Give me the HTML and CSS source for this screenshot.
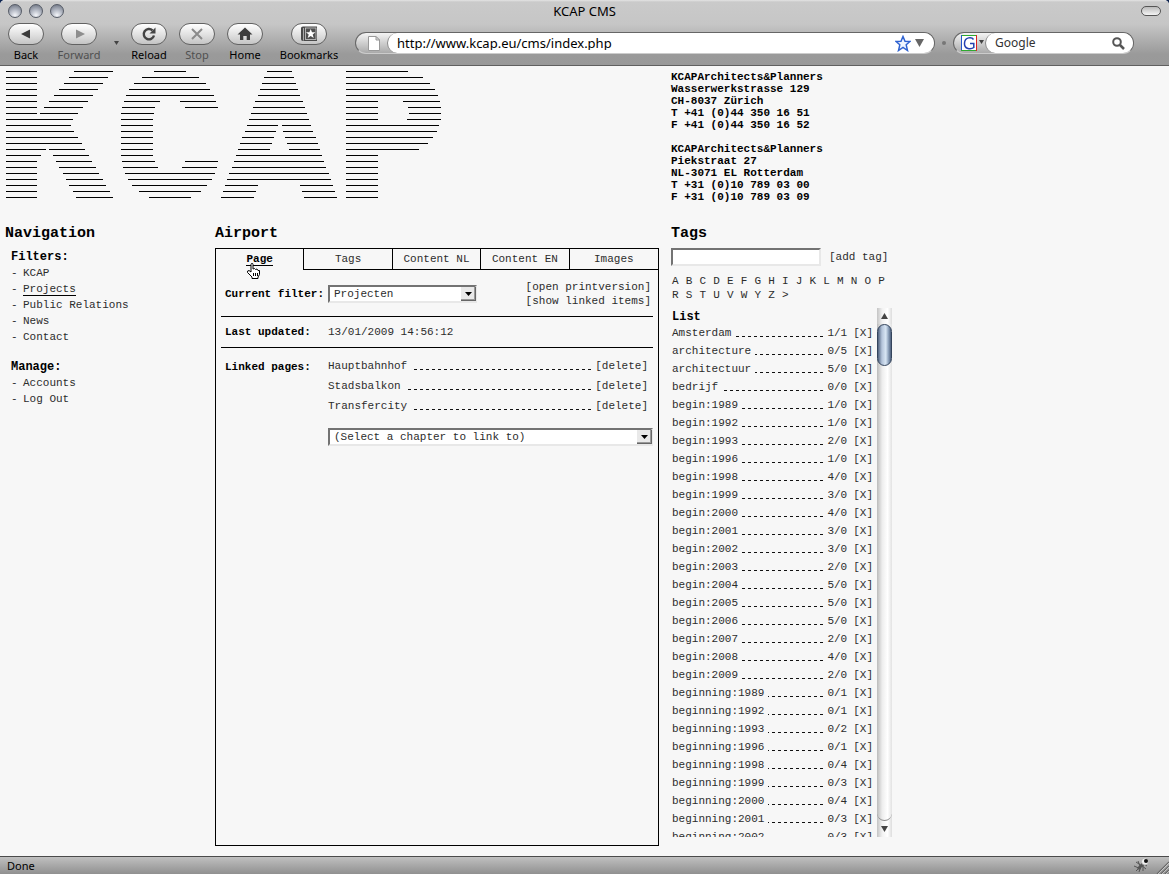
FILE: index.html
```html
<!DOCTYPE html>
<html lang="en">
<head>
<meta charset="utf-8">
<title>KCAP CMS</title>
<link rel="stylesheet" href="styles.css">
</head>
<body>
<div class="window">
  <header class="chrome">
    <div class="titlebar">
      <div class="lights"><button class="light" aria-label="Close"></button><button class="light" aria-label="Minimize"></button><button class="light" aria-label="Zoom"></button></div>
      <div class="title">KCAP CMS</div>
      <button class="toolbar-toggle" aria-label="Toggle toolbar"></button>
    </div>
    <div class="toolbar">
      <button class="tool tool-back"><span class="pill"><svg width="34" height="20" viewBox="0 0 34 20"><path d="M12 10L21 5.500V14.500Z" fill="#3c3c3c"/></svg></span>Back</button>
      <button class="tool tool-forward off"><span class="pill"><svg width="34" height="20" viewBox="0 0 34 20"><path d="M23 10L14 5.500V14.500Z" fill="#8e8e8e"/></svg></span>Forward</button>
      <button class="history" aria-label="History"><svg width="5" height="4" viewBox="0 0 5 4"><path d="M0 0H5L2.500 4Z" fill="#444"/></svg></button>
      <button class="tool"><span class="pill"><svg width="34" height="20" viewBox="0 0 34 20"><path d="M20.500 6.300A5.200 5.200 0 1 0 22 11.500" fill="none" stroke="#444" stroke-width="2.400"/><path d="M23.500 3.500V9.500H17.500Z" fill="#444"/></svg></span>Reload</button>
      <button class="tool off"><span class="pill"><svg width="34" height="20" viewBox="0 0 34 20"><path d="M12 5L22 15M22 5L12 15" fill="none" stroke="#8a8a8a" stroke-width="2"/></svg></span>Stop</button>
      <button class="tool"><span class="pill"><svg width="34" height="20" viewBox="0 0 34 20"><path d="M17 3.500L24.500 10.500H22V16H18.700V12H15.300V16H12V10.500H9.500Z" fill="#3e3e3e"/></svg></span>Home</button>
      <button class="tool tool-bookmarks"><span class="pill"><svg width="34" height="20" viewBox="0 0 34 20"><path d="M9 4Q9 2.500 11 2.500H25V17H11Q9 17 9 15Z" fill="#4a4a4a"/><path d="M11.500 4V16.500" stroke="#aaa"/><rect x="13.500" y="4" width="10.500" height="11.500" fill="#505050" stroke="#ddd" stroke-width=".700"/><path d="M18.700 5L20 8.300H23.400L20.700 10.500L21.700 14L18.700 12L15.700 14L16.700 10.500L14 8.300H17.400Z" fill="#fff"/></svg></span>Bookmarks</button>
      <div class="fields">
        <div class="field location">
          <span class="cap"><svg width="12" height="15" viewBox="0 0 12 15"><path d="M.500 .500H8L11.500 4V14.500H.500Z" fill="#fff" stroke="#999"/><path d="M8 .500V4H11.500Z" fill="#ddd" stroke="#999"/></svg></span>
          <div class="entry">
            <input type="text" value="http://www.kcap.eu/cms/index.php" aria-label="Location">
            <svg width="16" height="17" viewBox="0 0 16 17"><path d="M8 1.500L10 6.200L15 6.500L11.200 9.800L12.500 15.500L8 12.500L3.500 15.500L4.800 9.800L1 6.500L6 6.200Z" fill="#eef5ff" stroke="#2f62d0" stroke-width="1.500"/></svg>
            <svg class="drop" width="9" height="8" viewBox="0 0 9 8"><path d="M0 0H9L4.500 8Z" fill="#666"/></svg>
          </div>
        </div>
        <span class="grip"></span>
        <div class="field search">
          <span class="cap"><svg width="24" height="16" viewBox="0 0 24 16"><rect width="16" height="16" fill="#fff"/><path d="M0 .500H15" stroke="#2faa2f"/><path d="M.500 0V16" stroke="#2456c8"/><path d="M15.500 0V16" stroke="#d22"/><path d="M0 15.500H15" stroke="#2faa2f"/><path d="M12.500 4.500C11 2 4 1.500 3.500 8S10 14.500 12.800 12.500V8.500H9" fill="none" stroke="#2440b0" stroke-width="1.500"/><path d="M18 5H23L20.500 9Z" fill="#444"/></svg></span>
          <div class="entry">
            <input type="text" value="Google" aria-label="Search">
            <svg width="13" height="13" viewBox="0 0 13 13"><circle cx="5" cy="5" r="3.800" fill="none" stroke="#555" stroke-width="2"/><path d="M8 8L12 12" stroke="#555" stroke-width="2.500"/></svg>
          </div>
        </div>
      </div>
    </div>
  </header>

  <main class="page">
    <div class="masthead">
      <svg class="logo" role="img" aria-label="KCAP" width="436" height="127" viewBox="6 0 436 127">
        <path fill="none" stroke="#000" d="M6 .5H37M74 .5H113M154 .5H186M267 .5H292M346 .5H408
M6 6.500H37M69 6.500H108M142 6.500H199M264 6.500H294M346 6.500H423
M6 12.500H37M64 12.500H103M134 12.500H206M262 12.500H296M346 12.500H430
M6 18.500H37M59 18.500H98M129 18.500H210M260 18.500H298M346 18.500H435
M6 24.500H37M54 24.500H93M126 24.500H214M258 24.500H300M346 24.500H438
M6 30.500H37M49 30.500H88M124 30.500H160M180 30.500H216M255 30.500H303M346 30.500H378M403 30.500H440
M6 36.500H37M44 36.500H83M122 36.500H155M185 36.500H218M253 36.500H305M346 36.500H378M408 36.500H441
M6 42.500H37M40 42.500H78M121 42.500H154M251 42.500H307M346 42.500H378M409 42.500H441
M6 48.500H73M121 48.500H153M249 48.500H309M346 48.500H378M407 48.500H441
M6 54.500H71M121 54.500H153M247 54.500H278M282 54.500H311M346 54.500H439
M6 60.500H74M121 60.500H153M245 60.500H276M283 60.500H313M346 60.500H437
M6 66.500H78M121 66.500H153M242 66.500H274M285 66.500H316M346 66.500H433
M6 72.500H82M121 72.500H153M240 72.500H272M287 72.500H318M346 72.500H428
M6 78.500H46M49 78.500H85M121 78.500H153M238 78.500H270M289 78.500H320M346 78.500H419
M6 84.500H41M53 84.500H89M121 84.500H153M236 84.500H322M346 84.500H378
M6 90.500H37M56 90.500H92M122 90.500H155M185 90.500H218M234 90.500H324M346 90.500H378
M6 96.500H37M59 96.500H96M123 96.500H158M182 96.500H217M232 96.500H326M346 96.500H378
M6 102.500H37M63 102.500H99M125 102.500H215M229 102.500H329M346 102.500H378
M6 108.500H37M66 108.500H103M128 108.500H212M227 108.500H331M346 108.500H378
M6 114.500H37M69 114.500H106M132 114.500H207M225 114.500H258M300 114.500H333M346 114.500H378
M6 120.500H37M73 120.500H110M139 120.500H201M223 120.500H256M302 120.500H335M346 120.500H378
M6 126.500H37M76 126.500H113M149 126.500H191M221 126.500H254M304 126.500H337M346 126.500H378"/>
      </svg>
      <div class="offices">
        <address>KCAPArchitects&amp;Planners<br>Wasserwerkstrasse 129<br>CH-8037 Zürich<br>T +41 (0)44 350 16 51<br>F +41 (0)44 350 16 52</address>
        <address>KCAPArchitects&amp;Planners<br>Piekstraat 27<br>NL-3071 EL Rotterdam<br>T +31 (0)10 789 03 00<br>F +31 (0)10 789 03 09</address>
      </div>
    </div>

    <nav class="column">
      <h2>Navigation</h2>
      <div class="nav-groups">
        <section>
          <h3>Filters:</h3>
          <ul>
            <li><a href="#">KCAP</a></li>
            <li><a class="current" href="#">Projects</a></li>
            <li><a href="#">Public Relations</a></li>
            <li><a href="#">News</a></li>
            <li><a href="#">Contact</a></li>
          </ul>
        </section>
        <section>
          <h3>Manage:</h3>
          <ul>
            <li><a href="#">Accounts</a></li>
            <li><a href="#">Log Out</a></li>
          </ul>
        </section>
      </div>
    </nav>

    <section class="column editor">
      <h2>Airport</h2>
      <div class="panel">
        <div class="tabs">
          <a class="tab active" href="#"><span>Page</span><svg class="pointer" width="16" height="18" viewBox="0 0 16 18"><path d="M5.500 1.500Q7 1 7 2.500V7L8.500 6.500L9.500 7.500L11 7L12 8.500L13.500 8.500V12.500L12 15V16.500H6V15L1.500 10.500Q1 8.500 3 8.500L5 10V2.500Z" fill="#fff" stroke="#000"/><path d="M7.500 11V14M9.500 11V14M11.500 11V14" stroke="#000"/></svg></a>
          <a class="tab" href="#">Tags</a>
          <a class="tab" href="#">Content NL</a>
          <a class="tab" href="#">Content EN</a>
          <a class="tab" href="#">Images</a>
        </div>
        <div class="row filter-row">
          <label class="label" for="filter">Current filter:</label>
          <div class="select filter-select"><select id="filter"><option>Projecten</option></select><svg width="15" height="14" viewBox="0 0 15 14"><path d="M0 0H15V14H0Z" fill="#666"/><path d="M0 0H14V13H0Z" fill="#999"/><path d="M0 0H13V12H0Z" fill="#e9e9e9"/><path d="M4 5H11L7.500 9Z"/></svg></div>
          <div class="actions"><a href="#">[open printversion]</a><a href="#">[show linked items]</a></div>
        </div>
        <div class="row updated-row">
          <span class="label">Last updated:</span><span>13/01/2009 14:56:12</span>
        </div>
        <div class="row linked-row">
          <label class="label" for="chapter">Linked pages:</label>
          <div class="linked">
            <ul>
              <li><a href="#">Hauptbahnhof</a><i class="leader"></i><button>[delete]</button></li>
              <li><a href="#">Stadsbalkon</a><i class="leader"></i><button>[delete]</button></li>
              <li><a href="#">Transfercity</a><i class="leader"></i><button>[delete]</button></li>
            </ul>
            <div class="select"><select id="chapter"><option>(Select a chapter to link to)</option></select><svg width="15" height="14" viewBox="0 0 15 14"><path d="M0 0H15V14H0Z" fill="#666"/><path d="M0 0H14V13H0Z" fill="#999"/><path d="M0 0H13V12H0Z" fill="#e9e9e9"/><path d="M4 5H11L7.500 9Z"/></svg></div>
          </div>
        </div>
      </div>
    </section>

    <section class="column tags">
      <h2>Tags</h2>
      <div class="add"><input type="text" aria-label="New tag"><button>[add tag]</button></div>
      <div class="letters">
        <a href="#">A</a><a href="#">B</a><a href="#">C</a><a href="#">D</a><a href="#">E</a><a href="#">F</a><a href="#">G</a><a href="#">H</a><a href="#">I</a><a href="#">J</a><a href="#">K</a><a href="#">L</a><a href="#">M</a><a href="#">N</a><a href="#">O</a><a href="#">P</a><a href="#">R</a><a href="#">S</a><a href="#">T</a><a href="#">U</a><a href="#">V</a><a href="#">W</a><a href="#">Y</a><a href="#">Z</a><a href="#">&gt;</a>
      </div>
      <div class="scroller">
        <div class="list">
          <h3>List</h3>
          <ul>
            <li><a href="#">Amsterdam</a><i class="leader"></i><span>1/1</span><button>[X]</button></li>
            <li><a href="#">architecture</a><i class="leader"></i><span>0/5</span><button>[X]</button></li>
            <li><a href="#">architectuur</a><i class="leader"></i><span>5/0</span><button>[X]</button></li>
            <li><a href="#">bedrijf</a><i class="leader"></i><span>0/0</span><button>[X]</button></li>
            <li><a href="#">begin:1989</a><i class="leader"></i><span>1/0</span><button>[X]</button></li>
            <li><a href="#">begin:1992</a><i class="leader"></i><span>1/0</span><button>[X]</button></li>
            <li><a href="#">begin:1993</a><i class="leader"></i><span>2/0</span><button>[X]</button></li>
            <li><a href="#">begin:1996</a><i class="leader"></i><span>1/0</span><button>[X]</button></li>
            <li><a href="#">begin:1998</a><i class="leader"></i><span>4/0</span><button>[X]</button></li>
            <li><a href="#">begin:1999</a><i class="leader"></i><span>3/0</span><button>[X]</button></li>
            <li><a href="#">begin:2000</a><i class="leader"></i><span>4/0</span><button>[X]</button></li>
            <li><a href="#">begin:2001</a><i class="leader"></i><span>3/0</span><button>[X]</button></li>
            <li><a href="#">begin:2002</a><i class="leader"></i><span>3/0</span><button>[X]</button></li>
            <li><a href="#">begin:2003</a><i class="leader"></i><span>2/0</span><button>[X]</button></li>
            <li><a href="#">begin:2004</a><i class="leader"></i><span>5/0</span><button>[X]</button></li>
            <li><a href="#">begin:2005</a><i class="leader"></i><span>5/0</span><button>[X]</button></li>
            <li><a href="#">begin:2006</a><i class="leader"></i><span>5/0</span><button>[X]</button></li>
            <li><a href="#">begin:2007</a><i class="leader"></i><span>2/0</span><button>[X]</button></li>
            <li><a href="#">begin:2008</a><i class="leader"></i><span>4/0</span><button>[X]</button></li>
            <li><a href="#">begin:2009</a><i class="leader"></i><span>2/0</span><button>[X]</button></li>
            <li><a href="#">beginning:1989</a><i class="leader"></i><span>0/1</span><button>[X]</button></li>
            <li><a href="#">beginning:1992</a><i class="leader"></i><span>0/1</span><button>[X]</button></li>
            <li><a href="#">beginning:1993</a><i class="leader"></i><span>0/2</span><button>[X]</button></li>
            <li><a href="#">beginning:1996</a><i class="leader"></i><span>0/1</span><button>[X]</button></li>
            <li><a href="#">beginning:1998</a><i class="leader"></i><span>0/4</span><button>[X]</button></li>
            <li><a href="#">beginning:1999</a><i class="leader"></i><span>0/3</span><button>[X]</button></li>
            <li><a href="#">beginning:2000</a><i class="leader"></i><span>0/4</span><button>[X]</button></li>
            <li><a href="#">beginning:2001</a><i class="leader"></i><span>0/3</span><button>[X]</button></li>
            <li><a href="#">beginning:2002</a><i class="leader"></i><span>0/3</span><button>[X]</button></li>
          </ul>
        </div>
        <div class="scrollbar">
          <svg width="15" height="16" viewBox="0 0 15 16"><path d="M4 11H11L7.500 5Z" fill="#444"/></svg>
          <div class="track"><div class="thumb"></div></div>
          <svg width="15" height="16" viewBox="0 0 15 16"><path d="M4 5H11L7.500 11Z" fill="#444"/></svg>
        </div>
      </div>
    </section>
  </main>

  <footer class="status">
    <span>Done</span>
    <svg width="36" height="17" viewBox="0 0 36 17"><path d="M1 9L8 12M3 5L9 9M3 14L11 6M6 15L8 9M10 4L10 14M14 9L11 7M13 12L8 8M5 4L7 9" stroke="#555" stroke-width="1"/><path d="M5 12L11 6" stroke="#555" stroke-width="3"/><circle cx="12" cy="4.500" r="3.500" fill="#eee" stroke="#999" stroke-width=".500"/><circle cx="13" cy="4" r="2" fill="#111"/><path d="M24 17L36 5M28 17L36 9M32 17L36 13" stroke="#666" stroke-width="1.200"/><path d="M25 17L36 6M29 17L36 10M33 17L36 14" stroke="#ddd" stroke-width=".700"/></svg>
  </footer>
</div>
</body>
</html>
```
FILE: styles.css
```css
* { box-sizing: border-box; }
body { margin: 0; background: #0e2450; color: #2c2c2c; font: 11px/14px "Liberation Mono", monospace; }
h2, h3, ul, address { margin: 0; padding: 0; font-style: normal; }
ul { list-style: none; }
a { color: inherit; text-decoration: none; }
button, input, select { font: inherit; color: inherit; margin: 0; padding: 0; border: 0; background: none; }
input, select { min-width: 0; width: 100%; outline: 0; border-radius: 0; }
svg { display: block; flex: none; }

.window { display: flex; flex-direction: column; height: 100vh; min-height: 560px; background: #f7f7f7; border-radius: 5px 5px 0 0; overflow: hidden; }

/* Browser toolbar */
.chrome { flex: none; height: 66px; padding-top: 1px; background: linear-gradient(#e4e4e4 0, #cacaca 2px, #c6c6c6 24px, #9a9a9a 54px, #999 100%); border-bottom: 1px solid #606060; color: #000; font-family: "Noto Sans", sans-serif; }
.titlebar { display: grid; grid-template-columns: 1fr auto 1fr; align-items: center; height: 20px; padding: 0 8px; }
.title { font-size: 13px; line-height: 20px; }
.lights { display: flex; gap: 7px; }
.light { width: 14px; height: 14px; border: 1px solid #555b66; border-radius: 50%; background: radial-gradient(circle at 50% 85%, #f4f6fa, #b4b9c4 45%, #666d7c 100%); }
.toolbar-toggle { justify-self: end; width: 20px; height: 10px; border: 1px solid #555; border-radius: 5px; background: linear-gradient(#bbb, #f4f4f4); }
.toolbar { display: flex; align-items: flex-start; gap: 12px; padding: 2px 35px 0 8px; }
.tool { display: flex; flex: none; flex-direction: column; align-items: center; width: 36px; font-size: 11px; line-height: 20px; white-space: nowrap; }
.tool-forward { width: 46px; }
.tool-bookmarks { width: 68px; }
.off { color: #505050; }
.pill { width: 36px; height: 22px; border: 1px solid #626262; border-radius: 11px; background: linear-gradient(#fff, #ddd 60%, #c4c4c4); }
.history { flex: none; width: 5px; height: 40px; }
.fields { display: flex; flex: 1; align-items: center; gap: 7px; min-width: 0; height: 40px; }
.field { display: flex; height: 22px; padding: 1px; border: 1px solid #666; border-bottom-color: #ccc; border-radius: 11px; background: linear-gradient(#f4f4f4, #aaa); font-size: 12px; }
.location { flex: 1; min-width: 0; font-size: 13px; }
.search { flex: none; width: 181px; }
.cap { display: flex; flex: none; align-items: center; justify-content: flex-end; width: 31px; padding-right: 8px; }
.search .cap { padding-right: 1px; }
.entry { display: flex; flex: 1; align-items: center; gap: 4px; min-width: 0; margin: -1px; padding: 0 10px 0 9px; border-left: 1px solid #888; border-radius: 10px; background: #fff; }
.search .entry { padding-right: 8px; color: #333; }
.grip { flex: none; width: 4px; height: 4px; border-radius: 50%; background: #777; }

/* Page grid */
.page { display: grid; flex: 1; grid-template-columns: 198px minmax(0, 444px) 221px; grid-template-rows: auto minmax(0, 1fr); column-gap: 12px; min-height: 0; padding: 5px 5px 10px; }
.masthead { display: grid; grid-column: 1 / -1; grid-template-columns: subgrid; }
.logo { grid-column: 1 / 3; margin-left: 1px; }
.offices { display: grid; gap: 12px; margin-bottom: 21px; color: #000; font-weight: bold; line-height: 12px; }
.column { display: flex; flex-direction: column; min-width: 0; min-height: 0; }
h2 { flex: none; margin-bottom: 4px; color: #000; font-size: 15px; line-height: 20px; }
h3 { color: #000; font-size: 12px; line-height: 16px; }

.nav-groups { display: grid; gap: 14px; padding: 1px 0 0 6px; }
.nav-groups li { display: flex; line-height: 16px; }
.nav-groups li::before { content: "-"; width: 12px; }
.current { height: 15px; border-bottom: 1px solid #000; }

/* Editor */
.panel { flex: 1; border: 1px solid #000; }
.editor { min-width: 0; }
.tabs { display: grid; grid-template-columns: repeat(5, 1fr); }
.tab { height: 21px; border: solid #000; border-width: 0 1px 1px 0; line-height: 20px; text-align: center; }
.tab:last-child { border-right: 0; }
.tab.active { position: relative; border-bottom: 0; color: #000; font-weight: bold; }
.tab span { border-bottom: 1px solid #000; }
.pointer { position: absolute; top: 13px; left: 30px; }
.row { display: flex; margin: 0 5px; padding-left: 4px; }
.row + .row { border-top: 1px solid #000; }
.label { flex: none; width: 103px; color: #000; font-weight: bold; }
.filter-row { align-items: center; padding-top: 10px; padding-bottom: 8px; }
.filter-select { flex: none; width: 149px; }
.select { position: relative; height: 18px; }
.select select { display: block; height: 18px; padding-left: 4px; border: 2px solid; border-color: #737373 #e8e8e8 #e8e8e8 #737373; background: #fff; appearance: none; }
.select svg { position: absolute; top: 2px; right: 1px; pointer-events: none; }
.actions { display: grid; margin-left: auto; padding-right: 2px; }
.updated-row { padding-top: 8px; padding-bottom: 8px; }
.linked-row { padding-top: 8px; }
.linked-row .label { line-height: 22px; }
.linked { flex: 1; min-width: 0; }
.linked ul { padding: 0 5px 12px 0; }
.linked li, .list li { display: flex; line-height: 20px; }
.leader { flex: 1; height: 1px; margin: 13px 4px 0 6px; background: repeating-linear-gradient(to left, #111 0, #111 3px, transparent 3px, transparent 6px); }

/* Tags */
.add { display: flex; flex: none; gap: 8px; align-items: center; height: 18px; }
.add input { width: 150px; height: 18px; border: 2px solid; border-color: #737373 #e8e8e8 #e8e8e8 #737373; background: #fff; }
.letters { display: grid; flex: none; grid-template-columns: repeat(16, 1fr); margin: 8px 0 6px; padding-left: 1px; }
.scroller { display: flex; flex: 1; gap: 4px; min-height: 0; margin-bottom: 9px; }
.list { flex: 1; overflow: hidden; padding-left: 1px; }
.list h3 { height: 16px; line-height: 18px; }
.list li { line-height: 18px; }
.list li span { margin-right: 6px; }
.list .leader { margin: 12px 4px 0; }
.scrollbar { display: flex; flex: none; flex-direction: column; width: 15px; background: linear-gradient(to right, #c4c4c4, #f2f2f2 35%, #fff 70%, #ddd); }
.track { flex: 1; border-bottom: 1px solid #888; border-radius: 0 0 8px 8px; background: linear-gradient(to right, #bbb, #eee 35%, #fff 70%, #e2e2e2); }
.thumb { height: 42px; border: 1px solid #34445c; border-radius: 8px; background: linear-gradient(to right, #4e607c, #b4c4da 30%, #d8e6f4 60%, #8fa3bd 80%, #4e607c); }

/* Status bar */
.status { display: flex; flex: none; align-items: center; justify-content: space-between; height: 18px; padding-left: 7px; border-top: 1px solid #4a4a4a; background: linear-gradient(#c0c0c0, #909090); color: #000; font: 11px/17px "Noto Sans", sans-serif; }
```
